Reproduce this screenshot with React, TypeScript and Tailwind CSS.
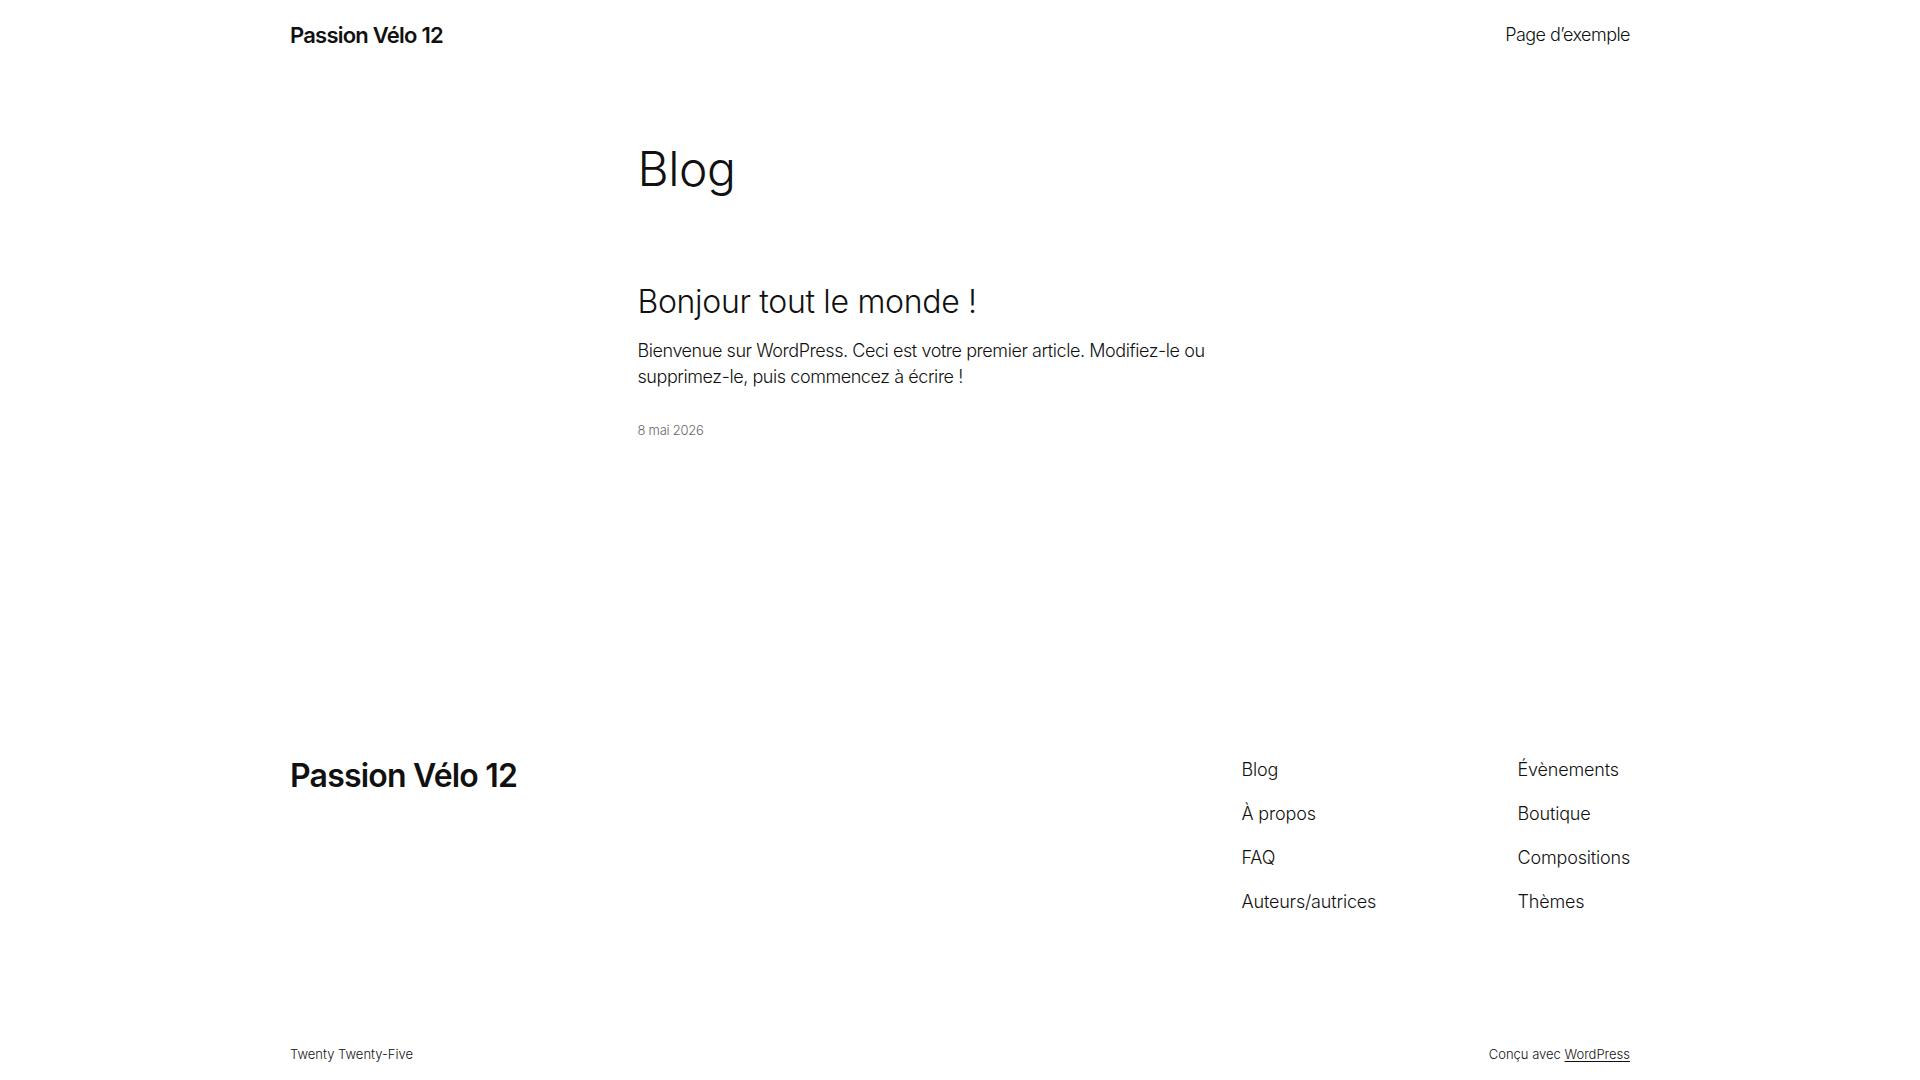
import React from "react";

const FOOTER_NAV_LEFT = ["Blog", "À propos", "FAQ", "Auteurs/autrices"];
const FOOTER_NAV_RIGHT = ["Évènements", "Boutique", "Compositions", "Thèmes"];

function SiteHeader(): React.JSX.Element {
  return (
    <header className="mx-auto flex h-[70px] w-[1340px] items-center justify-between">
      <a href="#" className="text-[22px] font-semibold leading-none tracking-[-0.035em] text-[#111111]">
        Passion Vélo 12
      </a>
      <nav>
        <a href="#" className="text-[18px] font-light leading-none tracking-[-0.03em] text-[#111111]">
          Page d’exemple
        </a>
      </nav>
    </header>
  );
}

function PostItem(): React.JSX.Element {
  return (
    <article className="mt-[87px]">
      <h2 className="text-[32px] font-light leading-[38px] tracking-[-0.01em] text-[#111111]">
        <a href="#">Bonjour tout le monde !</a>
      </h2>
      <p className="mt-[17px] text-[18px] font-light leading-[26px] tracking-[-0.024em] text-[#111111]">
        Bienvenue sur WordPress. Ceci est votre premier article. Modifiez-le ou supprimez-le, puis commencez à écrire !
      </p>
      <p className="mt-[30px] text-[13px] font-light leading-[20px] tracking-[-0.02em] text-[#686868]">8 mai 2026</p>
    </article>
  );
}

function SiteFooter(): React.JSX.Element {
  return (
    <footer className="mx-auto mt-[315px] w-[1340px] pb-[16px]">
      <div className="flex items-start justify-between">
        <a href="#" className="mt-[2px] text-[32px] font-semibold leading-[38px] tracking-[-0.025em] text-[#111111]">
          Passion Vélo 12
        </a>
        <div className="mt-[2px] flex">
          <ul className="flex w-[276px] flex-col gap-[19px]">
            {FOOTER_NAV_LEFT.map((label) => (
              <li key={label} className="text-[18px] font-light leading-[25px] tracking-[-0.01em]">
                <a href="#">{label}</a>
              </li>
            ))}
          </ul>
          <ul className="flex flex-col gap-[19px]">
            {FOOTER_NAV_RIGHT.map((label) => (
              <li key={label} className="text-[18px] font-light leading-[25px] tracking-[-0.01em]">
                <a href="#">{label}</a>
              </li>
            ))}
          </ul>
        </div>
      </div>

      <div className="mt-[130px] flex items-center justify-between text-[13px] font-light leading-[20px] text-[#111111]">
        <p>Twenty Twenty-Five</p>
        <p>
          Conçu avec{" "}
          <a href="#" className="underline underline-offset-2">
            WordPress
          </a>
        </p>
      </div>
    </footer>
  );
}

export default function App(): React.JSX.Element {
  return (
    <div className="min-h-screen bg-white font-['Inter','Liberation_Sans',sans-serif] text-[#111111] antialiased">
      <SiteHeader />
      <main className="mx-auto mt-[72px] w-[645px]">
        <h1 className="text-[48px] font-light leading-[54px] tracking-[-0.01em]">Blog</h1>
        <PostItem />
      </main>
      <SiteFooter />
    </div>
  );
}
